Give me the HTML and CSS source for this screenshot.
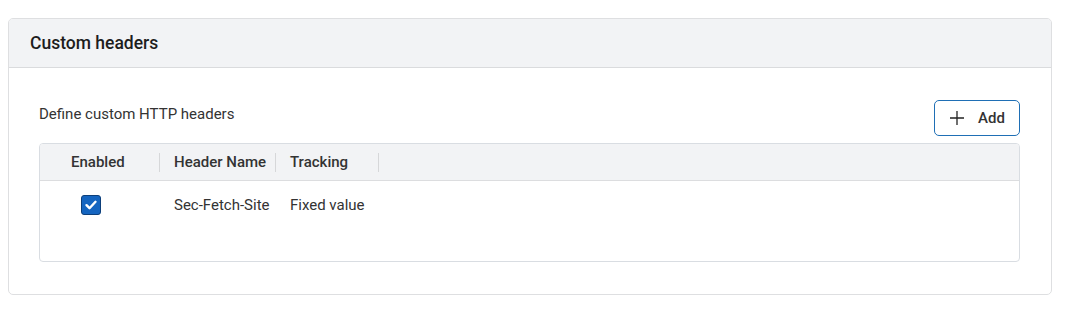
FILE: index.html
```html
<!DOCTYPE html>
<html>
<head>
<meta charset="utf-8">
<link rel="stylesheet" href="styles.css">
</head>
<body>
<div class="card">
  <div class="card-header">Custom headers</div>
  <div class="card-body">
    <div class="toolbar">
      <div class="desc">Define custom HTTP headers</div>
      <button class="add-btn">
        <svg width="16" height="16" viewBox="0 0 16 16"><path d="M8 1v14M1 8h14" stroke="#222" stroke-width="1.3" fill="none"/></svg>
        <span>Add</span>
      </button>
    </div>
    <div class="table">
      <div class="thead">
        <div class="th col-enabled">Enabled<span class="sep"></span></div>
        <div class="th col-name">Header Name<span class="sep"></span></div>
        <div class="th col-tracking">Tracking<span class="sep"></span></div>
      </div>
      <div class="row">
        <div class="td col-enabled">
          <span class="checkbox">
            <svg width="14" height="14" viewBox="0 0 14 14"><path d="M2.5 7.2l3 3 6-6.4" stroke="#fff" stroke-width="2.4" fill="none" stroke-linecap="round" stroke-linejoin="round"/></svg>
          </span>
        </div>
        <div class="td col-name">Sec-Fetch-Site</div>
        <div class="td col-tracking">Fixed value</div>
      </div>
    </div>
  </div>
</div>
</body>
</html>
```
FILE: styles.css
```css
* { box-sizing: border-box; }
body {
  margin: 0;
  padding: 18px 17px 0 8px;
  font-family: Roboto, "Liberation Sans", sans-serif;
  color: #333;
  background: #fff;
}
.card {
  width: 1044px;
  border: 1px solid #dedfe1;
  border-radius: 5px;
  overflow: hidden;
}
.card-header {
  height: 49px;
  background: #f2f3f5;
  border-bottom: 1px solid #dadbdd;
  padding: 0 21px;
  display: flex;
  align-items: center;
  font-size: 17.5px;
  font-weight: 500;
  color: #1d1d1d;
}
.card-body {
  padding: 32px 31px 32px 30px;
}
.toolbar {
  display: flex;
  justify-content: space-between;
  align-items: flex-start;
  margin-bottom: 7px;
}
.desc {
  font-size: 15px;
  color: #333;
  margin-top: 5px;
}
.add-btn {
  width: 86px;
  height: 36px;
  border: 1px solid #1f6fb5;
  border-radius: 5px;
  background: #fff;
  display: flex;
  align-items: center;
  gap: 13px;
  padding: 0 0 0 14px;
  font-family: inherit;
  font-size: 15px;
  font-weight: 500;
  color: #333;
  cursor: pointer;
}
.table {
  border: 1px solid #d9dde2;
  border-radius: 4px;
  height: 119px;
  overflow: hidden;
}
.thead {
  display: flex;
  height: 37px;
  background: #f2f3f5;
  border-bottom: 1px solid #dcdddf;
}
.th {
  position: relative;
  display: flex;
  align-items: center;
  font-size: 15px;
  font-weight: 500;
  color: #333;
}
.sep {
  position: absolute;
  right: 0;
  top: 9px;
  width: 1px;
  height: 19px;
  background: #d6d7d9;
}
.col-enabled { width: 120px; padding-left: 31px; }
.col-name { width: 116px; padding-left: 14px; }
.col-tracking { width: 103px; padding-left: 14px; }
.row {
  display: flex;
  height: 47px;
  align-items: center;
}
.td {
  font-size: 15px;
  color: #333;
  display: flex;
  align-items: center;
}
.td.col-enabled { padding-left: 41px; }
.checkbox {
  width: 20px;
  height: 20px;
  border-radius: 3px;
  background: #1565c0;
  border: 1px solid #0d3f7a;
  display: flex;
  align-items: center;
  justify-content: center;
}
```
